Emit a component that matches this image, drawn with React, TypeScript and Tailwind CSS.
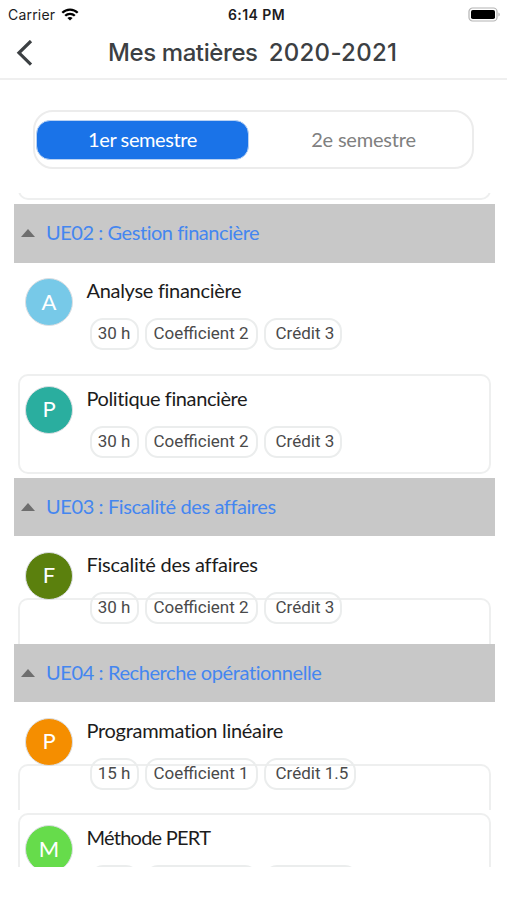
import { useState } from 'react';
import clsx from 'clsx';

type Subject = {
  name: string;
  tracking: string;
  color: string;
  details?: { hours: string; coefficient: string; credit: string };
  frame: 'none' | 'full' | 'partial';
};

type Unit = {
  title: string;
  tracking: string;
  subjects: Subject[];
};

const units: Unit[] = [
  {
    title: 'UE02 : Gestion financière',
    tracking: 'tracking-[-0.45px]',
    subjects: [
      {
        name: 'Analyse financière',
        tracking: 'tracking-[-0.3px]',
        color: 'bg-[#77c9e8]',
        details: { hours: '30 h', coefficient: '2', credit: '3' },
        frame: 'none',
      },
      {
        name: 'Politique financière',
        tracking: 'tracking-[-0.4px]',
        color: 'bg-[#2aae9f]',
        details: { hours: '30 h', coefficient: '2', credit: '3' },
        frame: 'full',
      },
    ],
  },
  {
    title: 'UE03 : Fiscalité des affaires',
    tracking: 'tracking-[-0.4px]',
    subjects: [
      {
        name: 'Fiscalité des affaires',
        tracking: 'tracking-[-0.25px]',
        color: 'bg-[#5b800d]',
        details: { hours: '30 h', coefficient: '2', credit: '3' },
        frame: 'partial',
      },
    ],
  },
  {
    title: 'UE04 : Recherche opérationnelle',
    tracking: 'tracking-[-0.4px]',
    subjects: [
      {
        name: 'Programmation linéaire',
        tracking: 'tracking-[-0.3px]',
        color: 'bg-[#f58e00]',
        details: { hours: '15 h', coefficient: '1', credit: '1.5' },
        frame: 'partial',
      },
      { name: 'Méthode PERT', tracking: 'tracking-[-0.75px]', color: 'bg-[#66dc4b]', frame: 'full' },
    ],
  },
];

function StatusBar() {
  return (
    <div className="grid h-7 shrink-0 grid-cols-3 items-center pl-2 pr-1.5 font-['Inter',sans-serif] text-[14px] text-[#1c1c1e]">
      <div className="flex items-center gap-1.5">
        <span className="tracking-[0.2px]">Carrier</span>
        <svg width="18" height="13" viewBox="0 0 18 13" fill="none" stroke="#000" strokeWidth="2.3">
          <path d="M1.3 4.8C5.6 .5 12.4 .5 16.7 4.8" />
          <path d="M4.2 7.8c2.7-2.7 6.9-2.7 9.6 0" />
          <path d="M9 12.6 6.4 10c1.5-1.3 3.7-1.3 5.2 0z" fill="#000" stroke="none" />
        </svg>
      </div>
      <span className="whitespace-nowrap pl-1 text-center font-semibold tracking-[0.4px]">6:14 PM</span>
      <svg className="justify-self-end" width="33" height="15" viewBox="0 0 33 15">
        <rect x="1" y="1" width="28" height="13" rx="3.6" fill="#fff" stroke="#b4b4b4" strokeWidth="1.2" />
        <rect x="3" y="3" width="24" height="9" rx="1.8" fill="#000" />
        <path d="M30.5 5.5c1.6.7 1.6 3.3 0 4z" fill="#a9a9a9" />
      </svg>
    </div>
  );
}

function Chip({ children, className }: { children?: React.ReactNode; className?: string }) {
  return (
    <span
      className={clsx(
        "flex h-8 items-center justify-center whitespace-nowrap rounded-[13px] border-2 border-[#ebeded] font-['Roboto',sans-serif] text-[17px] text-[#4a4a4a]",
        className,
      )}
    >
      {children}
    </span>
  );
}

function SubjectRow({ subject }: { subject: Subject }) {
  const { details } = subject;

  return (
    <div className="relative h-[107.5px] shrink-0 pl-[11px] pt-[15.5px]">
      {subject.frame === 'full' && (
        <div className="absolute inset-x-1 bottom-1 top-[3.5px] rounded-[10px] border-2 border-[#eeefef]" />
      )}
      {subject.frame === 'partial' && (
        <div className="absolute inset-x-1 bottom-0 top-[62px] rounded-t-[10px] border-2 border-b-0 border-[#eeefef]" />
      )}
      <div className="relative flex gap-[13.5px]">
        <div
          className={clsx(
            "flex size-12 shrink-0 items-center justify-center rounded-full border border-[#dcdfe3] pb-0.5 font-['Lato',sans-serif] text-[22px] text-white",
            subject.color,
          )}
        >
          {subject.name[0]}
        </div>
        <div>
          <div
            className={clsx(
              "h-[26px] whitespace-nowrap font-['Lato',sans-serif] text-[20px] leading-[25px] text-[#1c1c1c]",
              subject.tracking,
            )}
          >
            {subject.name}
          </div>
          <div className="mt-[14px] flex gap-1.5 pl-[3px]">
            <Chip className="w-[49px]">{details?.hours}</Chip>
            <Chip className="w-[113px]">{details && `Coefficient ${details.coefficient}`}</Chip>
            <Chip className={details ? 'pl-[10px] pr-[6px]' : 'w-[94px]'}>{details && `Crédit ${details.credit}`}</Chip>
          </div>
        </div>
      </div>
    </div>
  );
}

export default function App() {
  const [semester, setSemester] = useState(1);

  return (
    <div className="flex h-[900px] w-[507px] flex-col overflow-hidden bg-white">
      <StatusBar />

      {/* Header */}
      <header className="flex h-[52px] shrink-0 items-center border-b-2 border-[#efefef] pl-4">
        <svg width="18" height="26" viewBox="0 0 18 26" fill="none" stroke="#3c4043" strokeWidth="3.2">
          <path d="M15 1 3 12.8 15 24.6" />
        </svg>
        <h1 className="ml-[74px] flex gap-[11px] whitespace-nowrap font-['Inter',sans-serif] text-[24px] font-medium text-[#3c4043]">
          <span className="tracking-[-0.4px]">Mes matières</span>
          <span className="tracking-[0.3px]">2020-2021</span>
        </h1>
      </header>

      {/* Semester tabs */}
      <div className="ml-[33px] mt-[30px] flex h-[59px] w-[441px] shrink-0 items-center rounded-[20px] border-2 border-[#ececec] px-px">
        <button
          onClick={() => setSemester(1)}
          className={clsx(
            "h-10 w-[213px] rounded-[14px] pb-0.5 font-['Lato',sans-serif] text-[20px] tracking-[-0.4px]",
            semester === 1 ? 'border border-[#b9d2f3] bg-[#1a73e8] text-white' : 'text-[#808080]',
          )}
        >
          1er semestre
        </button>
        <button
          onClick={() => setSemester(2)}
          className={clsx(
            "ml-2 h-10 w-[213px] rounded-[14px] pb-0.5 font-['Lato',sans-serif] text-[20px] tracking-[-0.2px]",
            semester === 2 ? 'border border-[#b9d2f3] bg-[#1a73e8] text-white' : 'text-[#808080]',
          )}
        >
          2e semestre
        </button>
      </div>

      {/* Subjects list, the previous unit is scrolled out above */}
      <div className="ml-3.5 mt-6 flex h-[674px] w-[481px] shrink-0 flex-col overflow-hidden">
        <div className="flex h-[11px] shrink-0 flex-col justify-end overflow-hidden px-1 pb-1">
          <div className="h-8 shrink-0 rounded-b-[10px] border-2 border-t-0 border-[#eeefef]" />
        </div>
        {units.map((unit) => (
          <section key={unit.title} className="shrink-0">
            <div className="flex h-[58.5px] items-center bg-[#c8c8c8] pl-[7px]">
              <svg width="14" height="8" viewBox="0 0 14 8">
                <path d="M0 8 7 0l7 8z" fill="#6e6e6e" />
              </svg>
              <span
                className={clsx(
                  "ml-[11px] whitespace-nowrap pb-0.5 font-['Lato',sans-serif] text-[20px] text-[#4486f0]",
                  unit.tracking,
                )}
              >
                {unit.title}
              </span>
            </div>
            {unit.subjects.map((subject) => (
              <SubjectRow key={subject.name} subject={subject} />
            ))}
          </section>
        ))}
      </div>
    </div>
  );
}
